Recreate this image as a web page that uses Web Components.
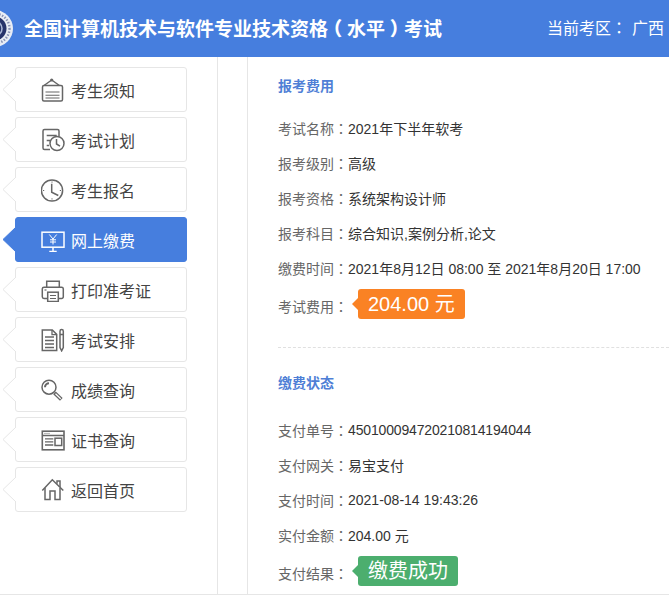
<!DOCTYPE html>
<html lang="zh">
<head>
<meta charset="utf-8">
<style>
  html, body { margin: 0; padding: 0; background: #fff; overflow: hidden; }
  body { width: 669px; height: 610px; font-family: "Liberation Sans", "Noto Sans CJK SC", sans-serif; }
</style>
</head>
<body>
<exam-header region="广西">全国计算机技术与软件专业技术资格<b>（</b>水平<b>）</b>考试</exam-header>
<exam-layout>
  <side-nav slot="nav">
    <nav-item icon="notice" label="考生须知"></nav-item>
    <nav-item icon="plan" label="考试计划"></nav-item>
    <nav-item icon="clock" label="考生报名"></nav-item>
    <nav-item icon="pay" label="网上缴费" active></nav-item>
    <nav-item icon="print" label="打印准考证"></nav-item>
    <nav-item icon="arrange" label="考试安排"></nav-item>
    <nav-item icon="search" label="成绩查询"></nav-item>
    <nav-item icon="cert" label="证书查询"></nav-item>
    <nav-item icon="home" label="返回首页"></nav-item>
  </side-nav>
  <info-section heading="报考费用" divided>
    <info-row label="考试名称">2021年下半年软考</info-row>
    <info-row label="报考级别">高级</info-row>
    <info-row label="报考资格">系统架构设计师</info-row>
    <info-row label="报考科目">综合知识,案例分析,论文</info-row>
    <info-row label="缴费时间">2021年8月12日 08:00 至 2021年8月20日 17:00</info-row>
    <info-row label="考试费用" tag><tag-pill color="#fa8224">204.00 元</tag-pill></info-row>
  </info-section>
  <info-section heading="缴费状态" second>
    <info-row label="支付单号"><span style="letter-spacing:-.16px">450100094720210814194044</span></info-row>
    <info-row label="支付网关">易宝支付</info-row>
    <info-row label="支付时间">2021-08-14 19:43:26</info-row>
    <info-row label="实付金额">204.00 元</info-row>
    <info-row label="支付结果" tag><tag-pill color="#4cae6e">缴费成功</tag-pill></info-row>
  </info-section>
</exam-layout>

<script>
// icons are 24x24 boxes, drawn with a grey stroke (currentColor)
const ICONS = {
  notice: `<path d="M10.7 2 3 7.5M10.7 2l7.7 5.5"/><circle cx="10.7" cy="2" r="1.6" fill="currentColor" stroke="none"/><rect x="1.5" y="7.5" width="20" height="15.5" rx="1.5"/><path d="M4.5 14h14M4.5 17.2h14M4.5 20h14" stroke-width="1.1"/>`,
  plan: `<path d="M9 21.5H3.5A1.5 1.5 0 0 1 2 20V3A1.5 1.5 0 0 1 3.5 1.5h13A1.5 1.5 0 0 1 18 3v5.5"/><path d="M5.7 7.5h10M5.7 12.5h4M5.7 17.5h2.3"/><circle cx="16" cy="15.5" r="7"/><path d="M15.5 11v5l3.5 2.2"/>`,
  clock: `<circle cx="11" cy="12.5" r="10.6"/><path d="M10.7 5.8v8.4l6.6 3.3"/><path d="M11 3.5v1.2M11 20.3v1.2M2 12.5h1.2M18.8 12.5H20" stroke-width="1"/>`,
  pay: `<rect x="1" y="4.2" width="22" height="15"/><path d="M12 19.2v4M8.3 23.5h7.4"/><path d="M8.3 6.5 12 11l3.7-4.5M12 11v5.5M9 11.8h6M9 14h6" stroke-width="1"/>`,
  print: `<path d="M5.7 9.2V3.2h12.6v6"/><path d="M6.5 20.5H3A1.7 1.7 0 0 1 1.3 18.8v-8A1.7 1.7 0 0 1 3 9.2h17.6a1.7 1.7 0 0 1 1.7 1.6v8a1.7 1.7 0 0 1-1.7 1.7h-3.3"/><rect x="6.7" y="14.2" width="10.6" height="9.3"/><path d="M9 17.5h6M9 20.5h6" stroke-width="1.2"/><path d="M3.5 12h2" stroke-width="1.2"/>`,
  arrange: `<path d="M1.3 2h10l4.4 4.4v16.1H1.3z"/><path d="M11 2v4.6h4.7M4 9h9M4 12.5h9M4 16h9M4 19.5h9" stroke-width="1.3"/><path d="M19 3.2a1.65 1.65 0 0 1 3.3 0v16.3l-1.65 3.3-1.65-3.3zM19 6.5h3.3"/>`,
  search: `<circle cx="8" cy="9.2" r="7"/><path d="M4 9.2a4 4 0 0 1 4-4" stroke-width="2"/><path d="M13.5 14.8 20.3 21.3" stroke-width="3.8"/><path d="M14.5 15.8 19.7 20.7" stroke="#fff" stroke-width="1.2"/>`,
  cert: `<rect x="1.3" y="3.2" width="21.7" height="18.6" stroke-width="1.6"/><path d="M1.3 7.5H23"/><path d="M3.5 5.4h1M5.5 5.4h1M7.5 5.4h1" stroke-width="1"/><path d="M4 10.8h8.3M4 13.8h8.3M4 17h8.3" stroke-width="1.3"/><rect x="14" y="10.2" width="6.7" height="7.3"/>`,
  home: `<path d="M1.3 12.5 11.3 1.8l11 10.7"/><path d="M16 5.8V3h3v6"/><path d="M4 10v11.5h5V13h5v8.500h5V10"/>`
};

// lang makes the face use its traditional form: the colon then sits centred
const COLON = `<span lang="zh-Hant" style='font-family:"Noto Sans CJK TC",sans-serif'>：</span>`;

class ExamHeader extends HTMLElement {
  connectedCallback() {
    this.attachShadow({ mode: "open" }).innerHTML = `
      <style>
        :host { display: flex; align-items: center; justify-content: space-between; height: 57px; background: #467ede; color: #fff; overflow: hidden; }
        .brand { display: flex; align-items: center; margin-left: -24px; gap: 11px; }
        .title { font-size: 19px; font-weight: 700; white-space: nowrap; padding-bottom: 3px; }
        /* halt trims the bracket to half width, padding then centres it in its square */
        ::slotted(b) { font-feature-settings: "halt"; padding: 0 4.75px; }
        .region { font-size: 16px; padding: 0 5px 3px 0; white-space: nowrap; }
        .region span + span { margin-left: 5px; }
      </style>
      <div class="brand">
        <svg width="37" height="37" viewBox="0 0 37 37">
          <circle cx="18.5" cy="18.5" r="18.5" fill="#e9edf5"/>
          <circle cx="18.5" cy="18.5" r="15" fill="none" stroke="#8a93b5" stroke-width="2.4" stroke-dasharray="1.5 1.5"/>
          <circle cx="18.5" cy="18.5" r="12" fill="#27336b"/>
          <circle cx="18.5" cy="18.5" r="7.5" fill="none" stroke="#aab6d6" stroke-width="1.6"/>
          <circle cx="18.5" cy="18.5" r="3.5" fill="#0f1a44"/>
        </svg>
        <div class="title"><slot></slot></div>
      </div>
      <div class="region">当前考区${COLON}<span>${this.getAttribute("region")}</span></div>`;
  }
}

class ExamLayout extends HTMLElement {
  connectedCallback() {
    this.attachShadow({ mode: "open" }).innerHTML = `
      <style>
        :host { display: grid; grid-template-columns: 218px 30px 1fr; height: 537px; border-bottom: 1px solid #e6e6e6; }
        .left { border-right: 1px solid #e6e6e6; }
        .gutter { border-right: 1px solid #e6e6e6; }
        .main { padding: 0 0 0 30px; min-width: 0; overflow: hidden; }
      </style>
      <div class="left"><slot name="nav"></slot></div>
      <div class="gutter"></div>
      <div class="main"><slot></slot></div>`;
  }
}

class SideNav extends HTMLElement {
  connectedCallback() {
    this.attachShadow({ mode: "open" }).innerHTML = `
      <style>
        :host { display: flex; flex-direction: column; gap: 5px; padding: 10px 0 0 3px; }
      </style>
      <slot></slot>`;
  }
}

class NavItem extends HTMLElement {
  connectedCallback() {
    const active = this.hasAttribute("active");
    this.attachShadow({ mode: "open" }).innerHTML = `
      <style>
        :host { display: block; width: 184px; height: 45px; position: relative; }
        .card {
          box-sizing: border-box; height: 45px; margin-left: 12px; width: 172px;
          display: flex; align-items: center; padding-left: 25px; gap: 5px;
          border: 1px solid #e6e6e6; border-radius: 3px; background: #fff;
          color: #444; font-size: 16px;
        }
        svg.ico { width: 24px; height: 24px; flex: none; color: #666; fill: none; stroke: currentColor; stroke-width: 1.5; margin-right: 1px; }
        .arrow { position: absolute; left: 0; top: 10px; }
        :host([active]) .card { background: #467ede; border-color: #467ede; color: #fff; }
        :host([active]) svg.ico { color: #fff; }
      </style>
      <svg class="arrow" width="14" height="26" viewBox="0 0 14 26">
        <path d="M13 0 0 12.5 13 25" fill="${active ? "#467ede" : "#fff"}" stroke="${active ? "#467ede" : "#e6e6e6"}"/>
      </svg>
      <div class="card">
        <svg class="ico" viewBox="0 0 24 24">${ICONS[this.getAttribute("icon")]}</svg>
        <span>${this.getAttribute("label")}</span>
      </div>`;
  }
}

class InfoSection extends HTMLElement {
  connectedCallback() {
    this.attachShadow({ mode: "open" }).innerHTML = `
      <style>
        :host { display: block; }
        :host([divided]) { border-bottom: 1px dashed #e0e0e0; height: 290px; }
        h2 { margin: 0; font-size: 14px; font-weight: 700; color: #4f7fd6; line-height: 18px; padding: 20px 0 15px; }
        :host([second]) h2 { padding: 26px 0 20px; }
      </style>
      <h2>${this.getAttribute("heading")}</h2>
      <slot></slot>`;
  }
}

class InfoRow extends HTMLElement {
  connectedCallback() {
    this.attachShadow({ mode: "open" }).innerHTML = `
      <style>
        :host { display: flex; align-items: center; height: 35px; font-size: 14px; color: #333; white-space: nowrap; }
        .k { color: #666; }
        :host([tag]) { height: 38px; }
        :host([tag]) .k { margin: 4px 10px 0 0; }
      </style>
      <span class="k">${this.getAttribute("label")}${COLON}</span><slot></slot>`;
  }
}

class TagPill extends HTMLElement {
  connectedCallback() {
    const color = this.getAttribute("color");
    this.attachShadow({ mode: "open" }).innerHTML = `
      <style>
        :host { display: inline-block; position: relative; height: 30px; line-height: 30px; padding: 0 10px; border-radius: 3px; background: ${color}; color: #fff; font-size: 20px; }
        i { position: absolute; left: -6px; top: 9px; border-style: solid; border-width: 6px 6px 6px 0; border-color: transparent ${color} transparent transparent; }
      </style>
      <i></i><slot></slot>`;
  }
}

customElements.define("exam-header", ExamHeader);
customElements.define("exam-layout", ExamLayout);
customElements.define("side-nav", SideNav);
customElements.define("nav-item", NavItem);
customElements.define("info-section", InfoSection);
customElements.define("info-row", InfoRow);
customElements.define("tag-pill", TagPill);
</script>
</body>
</html>
